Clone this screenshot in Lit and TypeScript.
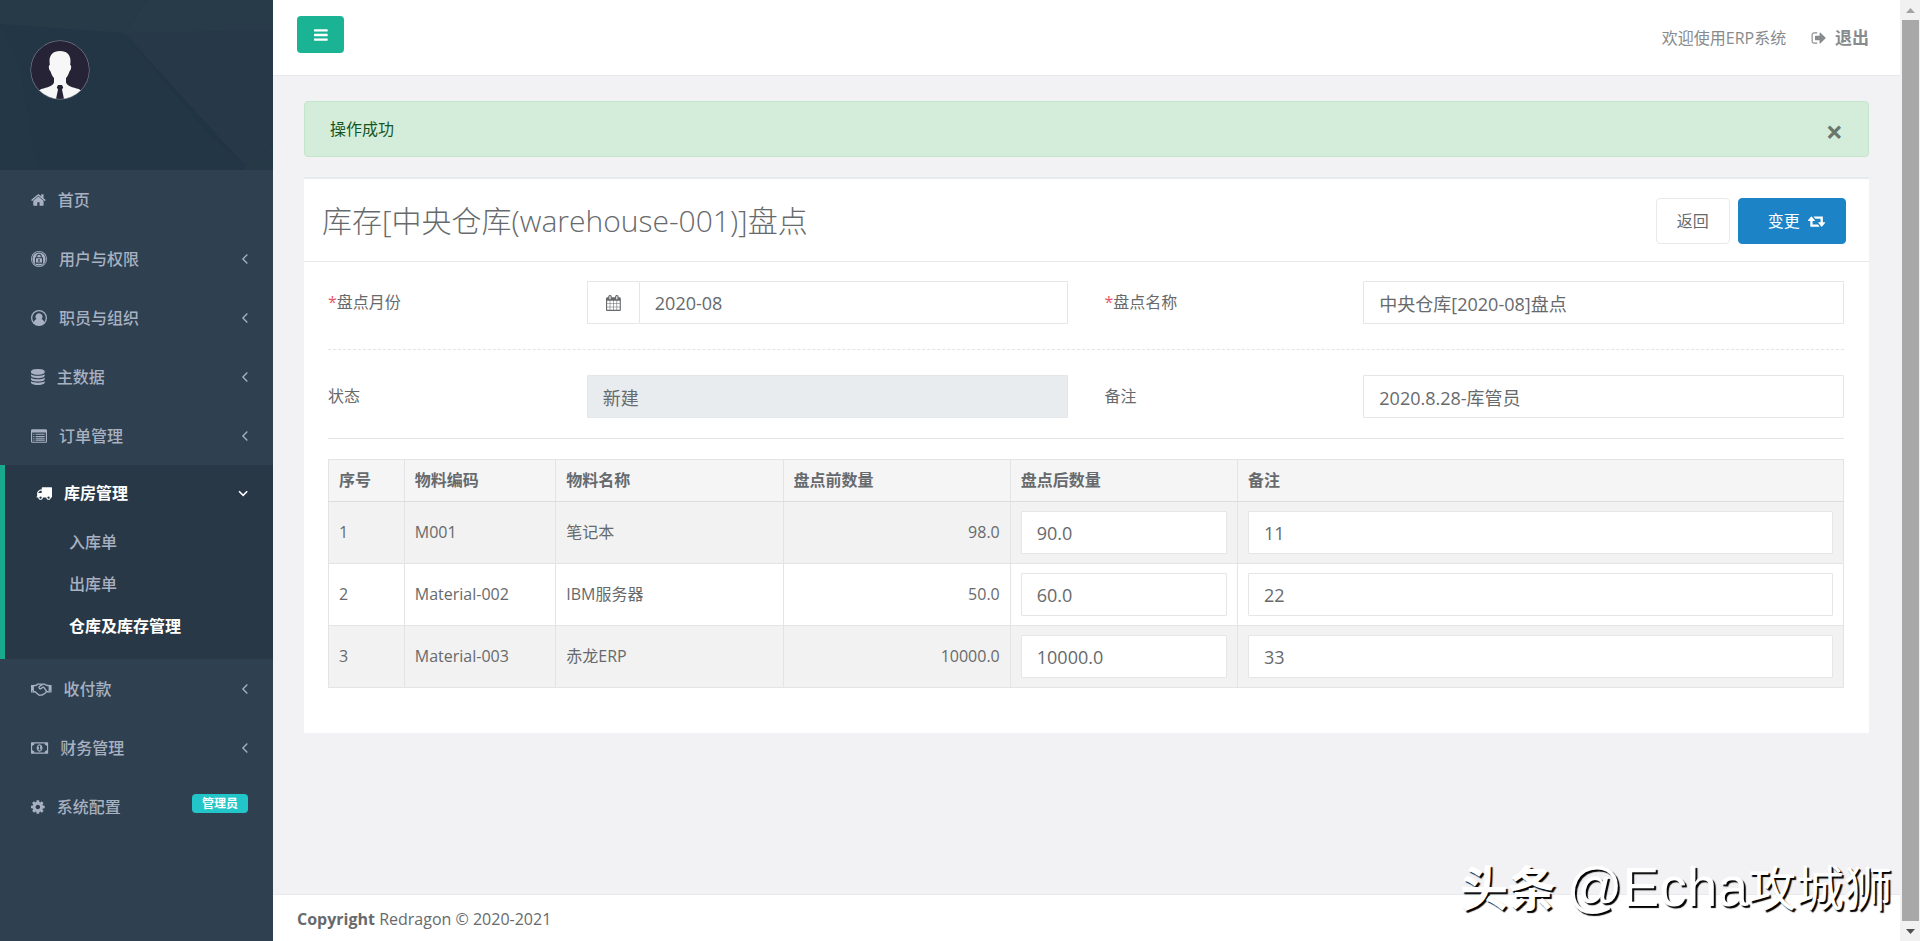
import { LitElement, html, css, svg, nothing } from "lit";
import { customElement, property, state } from "lit/decorators.js";
import { classMap } from "lit/directives/class-map.js";

/* Glyphs on a 1792-unit em; w is the advance width of each one. */
const ICONS: Record<string, { w: number; body: unknown }> = {
  home: {
    w: 1664,
    body: svg`<path transform="translate(-64)" d="M1472 992v480q0 26-19 45t-45 19h-384v-384h-256v384h-384q-26 0-45-19t-19-45v-480q0-1 .5-3t.5-3l575-474 575 474q1 2 1 6zm223-69l-62 74q-8 9-21 11h-3q-13 0-21-7l-692-577-692 577q-12 8-24 7-13-2-21-11l-62-74q-8-10-7-23.5t11-21.5l719-599q32-26 76-26t76 26l244 204v-195q0-14 9-23t23-9h192q14 0 23 9t9 23v408l219 182q10 8 11 21.5t-7 23.5z"/>`,
  },
  lock: {
    w: 1792,
    body: svg`<path fill-rule="evenodd" d="M896 0a896 896 0 1 0 0 1792a896 896 0 1 0 0-1792zM896 90a806 806 0 1 1 0 1612a806 806 0 1 1 0-1612z"/><path d="M896 160a736 736 0 1 0 0 1472a736 736 0 1 0 0-1472z"/><g fill="none" stroke="#2f4050" stroke-width="120"><path d="M500 760h792v600h-792z"/><path d="M640 760v-140a256 256 0 0 1 512 0v140"/></g><path fill="#2f4050" d="M896 900a100 100 0 0 1 60 180v150h-120v-150a100 100 0 0 1 60-180z"/>`,
  },
  user: {
    w: 1792,
    body: svg`<path fill-rule="evenodd" d="M896 0a896 896 0 1 0 0 1792a896 896 0 1 0 0-1792zM1480 1366C1440 1180 1340 1050 1180 1024A384 384 0 1 0 612 1024C452 1050 352 1180 312 1366A750 750 0 1 1 1480 1366z"/>`,
  },
  database: {
    w: 1536,
    body: svg`<path transform="translate(-128)" d="M896 768q237 0 443-43t325-127v170q0 69-103 128t-280 93.5-385 34.5-385-34.5-280-93.5-103-128v-170q119 84 325 127t443 43zm0 768q237 0 443-43t325-127v170q0 69-103 128t-280 93.5-385 34.5-385-34.5-280-93.5-103-128v-170q119 84 325 127t443 43zm0-384q237 0 443-43t325-127v170q0 69-103 128t-280 93.5-385 34.5-385-34.5-280-93.5-103-128v-170q119 84 325 127t443 43zm0-1152q208 0 385 34.5t280 93.5 103 128v128q0 69-103 128t-280 93.5-385 34.5-385-34.5-280-93.5-103-128v-128q0-69 103-128t280-93.5 385-34.5z"/>`,
  },
  list: {
    w: 1792,
    body: svg`<path fill-rule="evenodd" d="M160 128h1472q66 0 113 47t47 113v1216q0 66-47 113t-113 47H160q-66 0-113-47T0 1504V288q0-66 47-113t113-47zM160 512q-32 0-32 32v960q0 32 32 32h1472q32 0 32-32V544q0-32-32-32z"/><path d="M256 640h128v128H256zM256 896h128v128H256zM256 1152h128v128H256zM512 640h1024v128H512zM512 896h1024v128H512zM512 1152h1024v128H512zM256 1340h128v90H256zM512 1340h1024v90H512z"/>`,
  },
  truck: {
    w: 1792,
    body: svg`<path d="M640 1408q0-52-38-90t-90-38-90 38-38 90 38 90 90 38 90-38 38-90zm-384-512h384v-256h-158q-13 0-22 9l-195 195q-9 9-9 22v30zm1280 512q0-52-38-90t-90-38-90 38-38 90 38 90 90 38 90-38 38-90zm256-1088v1024q0 15-4 26.5t-13.5 18.5-16.5 11.5-23.5 6-22.5 2-25.5 0-22.5-.5q0 106-75 181t-181 75-181-75-75-181h-384q0 106-75 181t-181 75-181-75-75-181h-64q-3 0-22.5.5t-25.5 0-22.5-2-23.5-6-16.5-11.5-13.5-18.5-4-26.5q0-26 19-45t45-19v-320q0-8-.5-35t0-38 2.5-34.5 6.5-37 14-30.5 22.5-30l198-198q19-19 50.5-32t58.5-13h160v-192q0-26 19-45t45-19h1024q26 0 45 19t19 45z"/>`,
  },
  handshake: {
    w: 2304,
    body: svg`<path d="M0 448h330v840H0zM1974 448h330v840h-330z"/><path fill="none" stroke="currentColor" stroke-width="150" stroke-linejoin="round" stroke-linecap="round" d="M330 500h240l180-150h330l160 80M330 1200h130l390 350q120 90 240 20q130 40 220-60q130 10 180-100q130-10 150-130l80-80h254M1974 500h-200l-260-150h-240l-360 290q-60 90 30 190q110 90 230-20l140-120h110l350 500"/><path d="M120 1080h100v110H120zM2084 1080h100v110h-100z" fill="#2f4050"/>`,
  },
  money: {
    w: 1920,
    body: svg`<path d="M768 1152h384v-96h-128v-448h-114l-148 137 77 80q42-37 55-57h2v288h-128v96zm512-256q0 70-21 142t-59.5 134-101.5 101-138 39-138-39-101.5-101-59.5-134-21-142 21-142 59.5-134 101.5-101 138-39 138 39 101.5 101 59.5 134 21 142zm512 256v-512q-106 0-181-75t-75-181h-1152q0 106-75 181t-181 75v512q106 0 181 75t75 181h1152q0-106 75-181t181-75zm128-832v1152q0 26-19 45t-45 19h-1792q-26 0-45-19t-19-45v-1152q0-26 19-45t45-19h1792q26 0 45 19t19 45z"/>`,
  },
  cog: {
    w: 1536,
    body: svg`<path transform="translate(-128)" d="M1152 896q0-106-75-181t-181-75-181 75-75 181 75 181 181 75 181-75 75-181zm512-109v222q0 12-8 23t-20 13l-185 28q-19 54-39 91 35 50 107 138 10 12 10 25t-9 23q-27 37-99 108t-94 71q-12 0-26-9l-138-108q-44 23-91 38-16 136-29 186-7 28-36 28h-222q-14 0-24.5-8.5t-11.5-21.5l-28-184q-49-16-90-37l-141 107q-10 9-25 9-14 0-25-11-126-114-165-168-7-10-7-23 0-12 8-23 15-21 51-66.5t54-70.5q-27-50-41-99l-183-27q-13-2-21-12.5t-8-23.5v-222q0-12 8-23t19-13l186-28q14-46 39-92-40-57-107-138-10-12-10-24 0-10 9-23 26-36 98.5-107.5t94.5-71.5q13 0 26 10l138 107q44-23 91-38 16-136 29-186 7-28 36-28h222q14 0 24.5 8.5t11.5 21.5l28 184q49 16 90 37l142-107q9-9 24-9 13 0 25 10 129 119 165 170 7 8 7 22 0 12-8 23-15 21-51 66.5t-54 70.5q26 50 41 98l183 28q13 2 21 12.5t8 23.5z"/>`,
  },
  bars: {
    w: 1536,
    body: svg`<path transform="translate(-128)" d="M1664 1344v128q0 26-19 45t-45 19h-1408q-26 0-45-19t-19-45v-128q0-26 19-45t45-19h1408q26 0 45 19t19 45zm0-512v128q0 26-19 45t-45 19h-1408q-26 0-45-19t-19-45v-128q0-26 19-45t45-19h1408q26 0 45 19t19 45zm0-512v128q0 26-19 45t-45 19h-1408q-26 0-45-19t-19-45v-128q0-26 19-45t45-19h1408q26 0 45 19t19 45z"/>`,
  },
  calendar: {
    w: 1664,
    body: svg`<path transform="translate(-64)" d="M192 1664h288v-288h-288v288zm352 0h320v-288h-320v288zm-352-352h288v-320h-288v320zm352 0h320v-320h-320v320zm-352-384h288v-288h-288v288zm736 736h320v-288h-320v288zm-384-736h320v-288h-320v288zm768 736h288v-288h-288v288zm-384-352h320v-320h-320v320zm-352-864v-288q0-13-9.5-22.5t-22.5-9.5h-64q-13 0-22.5 9.5t-9.5 22.5v288q0 13 9.5 22.5t22.5 9.5h64q13 0 22.5-9.5t9.5-22.5zm736 864h288v-320h-288v320zm-384-384h320v-288h-320v288zm384 0h288v-288h-288v288zm32-480v-288q0-13-9.5-22.5t-22.5-9.5h-64q-13 0-22.5 9.5t-9.5 22.5v288q0 13 9.5 22.5t22.5 9.5h64q13 0 22.5-9.5t9.5-22.5zm384-64v1280q0 52-38 90t-90 38h-1408q-52 0-90-38t-38-90v-1280q0-52 38-90t90-38h128v-96q0-66 47-113t113-47h64q66 0 113 47t47 113v96h384v-96q0-66 47-113t113-47h64q66 0 113 47t47 113v96h128q52 0 90 38t38 90z"/>`,
  },
  signout: {
    w: 1664,
    body: svg`<path d="M704 1440q0 4 1 20t.5 26.5-3 23.5-10 19.5-20.5 6.5h-320q-119 0-203.5-84.5t-84.5-203.5v-704q0-119 84.5-203.5t203.5-84.5h320q13 0 22.5 9.5t9.5 22.5q0 4 1 20t.5 26.5-3 23.5-10 19.5-20.5 6.5h-320q-66 0-113 47t-47 113v704q0 66 47 113t113 47h312l11.5 1 11.5 3 8 5.5 7 9 2 13.5zm928-544q0 26-19 45l-544 544q-19 19-45 19t-45-19-19-45v-288h-448q-26 0-45-19t-19-45v-384q0-26 19-45t45-19h448v-288q0-26 19-45t45-19 45 19l544 544q19 19 19 45z"/>`,
  },
  retweet: {
    w: 1920,
    body: svg`<path d="M1280 1504q0 13-9.500 22.500t-22.500 9.500h-960q-8 0-13.500-2t-9-7-5.500-8-3-11.500-1-11.500v-600h-192q-26 0-45-19t-19-45q0-24 15-41l320-384q19-22 49-22t49 22l320 384q15 17 15 41 0 26-19 45t-45 19h-192v384h576q16 0 25 11l160 192q7 10 7 21zm640-416q0 24-15 41l-320 384q-20 23-49 23t-49-23l-320-384q-15-17-15-41 0-26 19-45t45-19h192v-384h-576q-16 0-25-12l-160-192q-7-9-7-20 0-13 9.500-22.500t22.500-9.500h960q8 0 13.500 2t9 7 5.500 8 3 11.500 1 11.500v600h192q26 0 45 19t19 45z"/>`,
  },
  left: {
    w: 640,
    body: svg`<path fill="none" stroke="currentColor" stroke-width="150" d="M600 400L100 896L600 1392"/>`,
  },
  down: {
    w: 1152,
    body: svg`<path fill="none" stroke="currentColor" stroke-width="180" d="M120 700L576 1156L1032 700"/>`,
  },
};

const icon = (name: string) => {
  const { w, body } = ICONS[name];
  return html`<svg class="icon" viewBox="0 0 ${w} 1792" aria-hidden="true">${body}</svg>`;
};

const shared = css`
  * {
    box-sizing: border-box;
  }
  .icon {
    height: 16px;
    flex: none;
    fill: currentColor;
    display: block;
    overflow: visible;
  }
  a {
    color: inherit;
    text-decoration: none;
  }
  button {
    font: inherit;
    cursor: pointer;
  }
`;

interface MenuItem {
  label: string;
  icon: string;
  leaf?: boolean;
  badge?: string;
  children?: { label: string; current?: boolean }[];
}

const MENU: MenuItem[] = [
  { label: "首页", icon: "home", leaf: true },
  { label: "用户与权限", icon: "lock" },
  { label: "职员与组织", icon: "user" },
  { label: "主数据", icon: "database" },
  { label: "订单管理", icon: "list" },
  {
    label: "库房管理",
    icon: "truck",
    children: [
      { label: "入库单" },
      { label: "出库单" },
      { label: "仓库及库存管理", current: true },
    ],
  },
  { label: "收付款", icon: "handshake" },
  { label: "财务管理", icon: "money" },
  { label: "系统配置", icon: "cog", badge: "管理员" },
];

@customElement("side-menu")
export class SideMenu extends LitElement {
  static styles = [
    shared,
    css`
      :host {
        display: block;
        background: #2f4050;
        color: #a7b1c2;
        font-weight: 500;
      }
      .head {
        height: 170px;
        display: grid;
        background: #233645;
        overflow: hidden;
      }
      .pattern,
      .avatar {
        grid-area: 1 / 1;
      }
      .pattern {
        width: 100%;
        height: 100%;
      }
      .avatar {
        width: 60px;
        height: 60px;
        margin: 40px 0 0 30px;
      }
      ul {
        list-style: none;
        margin: 0;
        padding: 0;
      }
      .row {
        display: flex;
        align-items: center;
        gap: 12px;
        height: 59px;
        padding: 0 25px 0 31px;
      }
      .arrow {
        margin-left: auto;
        display: flex;
      }
      .open {
        background: #293846;
        border-left: 5px solid #19aa8d;
        padding-bottom: 12px;
      }
      .open .row {
        height: 56px;
        color: #fff;
        font-weight: 700;
      }
      .sub a {
        display: block;
        line-height: 42px;
        padding-left: 64px;
      }
      .sub .current {
        color: #fff;
        font-weight: 700;
      }
      .badge {
        margin-left: auto;
        margin-bottom: 6px;
        padding: 0 10px;
        border-radius: 4px;
        background: #23c6c8;
        color: #fff;
        font-size: 12px;
        font-weight: 700;
        line-height: 19px;
      }
    `,
  ];

  render() {
    return html`
      <div class="head">
        <svg class="pattern" viewBox="0 0 273 170" preserveAspectRatio="none" aria-hidden="true">
          <path d="M0 0H147L124 33L0 24Z" fill="#273a48" />
          <path d="M147 0H273V145L245 166L124 33Z" fill="#273948" />
          <path d="M147 0H273V30L124 33Z" fill="#283b49" />
          <path d="M245 166L273 145V170H243Z" fill="#263947" />
          <path d="M0 24L18 60L38 170H0Z" fill="#243746" />
          <path d="M124 33L245 166L205 130Z" fill="#213443" />
        </svg>
        <svg class="avatar" viewBox="0 0 60 60" role="img" aria-label="用户头像">
          <defs><clipPath id="round"><circle cx="30" cy="30" r="29" /></clipPath></defs>
          <circle cx="30" cy="30" r="29.500" fill="#8d8f9c" />
          <g clip-path="url(#round)">
            <rect width="60" height="60" fill="#272336" />
            <path fill="#f7f7f8" d="M30 11c7 0 10.500 4 10.500 10l-.3 4c1.500 0 1.300 5-.8 6.500c-.8 3-1.900 5-3.400 6.500v4.500c1 3 5 4.500 9 5.500c4 1 7 2 9 6v8H6v-8c2-4 5-5 9-6c4-1 8-2.500 9-5.500V38c-1.500-1.500-2.600-3.500-3.400-6.500c-2.100-1.500-2.300-6.500-.8-6.500l-.3-4C19.500 15 23 11 30 11z" />
            <path fill="#272336" d="M28 45h4l1.200 2.500l-1.200 2l2 9.500h-8l2-9.500l-1.200-2z" />
          </g>
        </svg>
      </div>
      <nav>
        <ul>
          ${MENU.map(
            (m) => html`<li class=${classMap({ open: !!m.children })}>
              <a class="row" href="#">
                ${icon(m.icon)}<span>${m.label}</span>
                ${m.badge
                  ? html`<span class="badge">${m.badge}</span>`
                  : m.leaf
                    ? nothing
                    : html`<span class="arrow">${icon(m.children ? "down" : "left")}</span>`}
              </a>
              ${m.children
                ? html`<ul class="sub">
                    ${m.children.map(
                      (c) => html`<li><a class=${classMap({ current: !!c.current })} href="#">${c.label}</a></li>`,
                    )}
                  </ul>`
                : nothing}
            </li>`,
          )}
        </ul>
      </nav>
    `;
  }
}

interface StockRow {
  code: string;
  name: string;
  before: string;
  after: string;
  note: string;
}

@customElement("stock-form")
export class StockForm extends LitElement {
  @property({ attribute: false }) rows: StockRow[] = [];

  static styles = [
    shared,
    css`
      :host {
        display: block;
        background: #fff;
        border-top: 2px solid #e7eaec;
      }
      .title {
        display: flex;
        align-items: center;
        gap: 8px;
        padding: 19px 23px 17px 18px;
        border-bottom: 1px solid #e7eaec;
      }
      h2 {
        flex: 1;
        margin: 0;
        font-size: 30px;
        font-weight: 300;
        line-height: 46px;
      }
      .btn {
        display: flex;
        align-items: center;
        gap: 8px;
        height: 46px;
        padding: 0 20px;
        border: 1px solid #e7eaec;
        border-radius: 4px;
        background: #fff;
        color: inherit;
      }
      .primary {
        padding: 0 20px 0 29px;
        border-color: #1c84c6;
        background: #1c84c6;
        color: #fff;
      }
      .body {
        padding: 19px 25px 45px 24px;
      }
      .fields {
        display: grid;
        grid-template-columns: repeat(12, minmax(0, 1fr));
        column-gap: 37px;
      }
      .fields label {
        grid-column: span 2;
        line-height: 43px;
      }
      .req {
        color: #ed5565;
      }
      .control {
        grid-column: span 4;
        display: flex;
      }
      .addon {
        display: grid;
        place-items: center;
        width: 52px;
        border: 1px solid #e5e6e7;
        border-right: 0;
        color: #676a6c;
      }
      input {
        flex: 1;
        width: 100%;
        min-width: 0;
        height: 43px;
        margin: 0;
        padding: 0 15px;
        border: 1px solid #e5e6e7;
        border-radius: 1px;
        background: #fff;
        color: inherit;
        font: inherit;
        font-size: 18px;
        outline: none;
      }
      input:disabled {
        background: #e9ecef;
        opacity: 1;
      }
      hr {
        margin: 20px 0;
        border: 0;
        border-top: 1px solid #e2e4e6;
      }
      .dashed {
        margin: 25px 0;
        border-top: 1px dashed #e2e5e7;
      }
      table {
        width: 100%;
        table-layout: fixed;
        border-collapse: collapse;
      }
      th,
      td {
        padding: 9px 10px;
        border: 1px solid #e3e4e6;
        text-align: left;
        line-height: 23px;
      }
      th {
        background: #f5f5f6;
        border-bottom-color: #dddddf;
        font-weight: 700;
      }
      td input {
        display: block;
        height: 43px;
      }
      tbody tr:nth-child(odd) {
        background: #f2f2f2;
      }
      .num {
        text-align: right;
      }
      .w5 {
        width: 5%;
      }
      .w10 {
        width: 10%;
      }
      .w15 {
        width: 15%;
      }
    `,
  ];

  render() {
    return html`
      <div class="title">
        <h2>库存[中央仓库(warehouse-001)]盘点</h2>
        <button class="btn" type="button">返回</button>
        <button class="btn primary" type="button">变更${icon("retweet")}</button>
      </div>
      <form class="body">
        <div class="fields">
          <label for="month"><span class="req">*</span>盘点月份</label>
          <div class="control">
            <span class="addon">${icon("calendar")}</span>
            <input id="month" type="text" value="2020-08" />
          </div>
          <label for="name"><span class="req">*</span>盘点名称</label>
          <div class="control"><input id="name" type="text" value="中央仓库[2020-08]盘点" /></div>
        </div>
        <hr class="dashed" />
        <div class="fields">
          <label for="status">状态</label>
          <div class="control"><input id="status" type="text" value="新建" disabled /></div>
          <label for="note">备注</label>
          <div class="control"><input id="note" type="text" value="2020.8.28-库管员" /></div>
        </div>
        <hr />
        <table>
          <colgroup>
            <col class="w5" />
            <col class="w10" />
            <col class="w15" />
            <col class="w15" />
            <col class="w15" />
            <col />
          </colgroup>
          <thead>
            <tr>
              <th>序号</th>
              <th>物料编码</th>
              <th>物料名称</th>
              <th>盘点前数量</th>
              <th>盘点后数量</th>
              <th>备注</th>
            </tr>
          </thead>
          <tbody>
            ${this.rows.map(
              (r, i) => html`<tr>
                <td>${i + 1}</td>
                <td>${r.code}</td>
                <td>${r.name}</td>
                <td class="num">${r.before}</td>
                <td><input type="text" aria-label="盘点后数量" .value=${r.after} /></td>
                <td><input type="text" aria-label="备注" .value=${r.note} /></td>
              </tr>`,
            )}
          </tbody>
        </table>
      </form>
    `;
  }
}

@customElement("app-root")
export class AppRoot extends LitElement {
  @state() private alertOpen = true;

  private rows: StockRow[] = [
    { code: "M001", name: "笔记本", before: "98.0", after: "90.0", note: "11" },
    { code: "Material-002", name: "IBM服务器", before: "50.0", after: "60.0", note: "22" },
    { code: "Material-003", name: "赤龙ERP", before: "10000.0", after: "10000.0", note: "33" },
  ];

  static styles = [
    shared,
    css`
      :host {
        display: grid;
        grid-template-columns: 273px minmax(0, 1fr) 20px;
        min-height: 100vh;
        position: relative;
        background: #f2f2f4;
        color: #676a6c;
        font-family: "Open Sans", "Noto Sans CJK SC", sans-serif;
        font-size: 16px;
        line-height: 24px;
      }
      .page {
        display: flex;
        flex-direction: column;
      }
      .top {
        display: flex;
        align-items: center;
        height: 76px;
        padding: 0 31px 0 24px;
        border-bottom: 1px solid #e7eaec;
        background: #fff;
        color: #888b8d;
      }
      .toggle {
        display: grid;
        place-items: center;
        width: 47px;
        height: 37px;
        margin: 0 auto 6px 0;
        padding: 0;
        border: 0;
        border-radius: 4px;
        background: #1ab394;
        color: #fff;
      }
      .logout {
        display: flex;
        align-items: center;
        gap: 9px;
        margin-left: 25px;
        font-size: 17px;
        font-weight: 700;
      }
      .content {
        flex: 1;
        display: flex;
        flex-direction: column;
        gap: 20px;
        padding: 25px 31px 40px;
      }
      .alert {
        display: flex;
        align-items: center;
        justify-content: space-between;
        height: 56px;
        padding: 0 25px;
        border: 1px solid #c3e6cb;
        border-radius: 4px;
        background: #d4edda;
        color: #155724;
      }
      .close {
        padding: 6px 0 0;
        border: 0;
        background: none;
        color: #6a776d;
        font-size: 30px;
        font-weight: 700;
        line-height: 24px;
      }
      .foot {
        height: 47px;
        padding: 12px 24px;
        border-top: 1px solid #e7eaec;
        background: #fff;
      }
      .scroll {
        position: sticky;
        top: 0;
        height: 100vh;
        display: flex;
        flex-direction: column;
        align-items: center;
        background: #f1f1f1;
      }
      .scroll svg {
        flex: none;
        width: 20px;
        height: 20px;
      }
      .thumb {
        flex: 1;
        width: 17px;
        background: #a8a8a8;
      }
      .mark {
        position: absolute;
        right: 28px;
        bottom: 22px;
        color: #fff;
        font-size: 48px;
        line-height: 64px;
        font-family: "Noto Sans CJK SC", sans-serif;
        text-shadow: 2px 2px 1px #000;
        white-space: nowrap;
        pointer-events: none;
      }
      .mark b {
        font-weight: 700;
      }
      .latin {
        font-family: "Liberation Sans", sans-serif;
        font-size: 55px;
      }
    `,
  ];

  render() {
    return html`
      <side-menu></side-menu>
      <div class="page">
        <header class="top">
          <button class="toggle" type="button" aria-label="切换菜单">${icon("bars")}</button>
          <span>欢迎使用ERP系统</span>
          <a class="logout" href="#">${icon("signout")}<span>退出</span></a>
        </header>
        <main class="content">
          ${this.alertOpen
            ? html`<div class="alert" role="alert">
                <span>操作成功</span>
                <button class="close" type="button" aria-label="关闭" @click=${() => (this.alertOpen = false)}>×</button>
              </div>`
            : nothing}
          <stock-form .rows=${this.rows}></stock-form>
        </main>
        <footer class="foot"><strong>Copyright</strong> Redragon © 2020-2021</footer>
      </div>
      <div class="scroll" aria-hidden="true">
        <svg viewBox="0 0 20 20"><path d="M6 13L10.500 8L15 13Z" fill="#a3a3a3" /></svg>
        <div class="thumb"></div>
        <svg viewBox="0 0 20 20"><path d="M6 8H15L10.500 13Z" fill="#505050" /></svg>
      </div>
      <div class="mark"><b>头条</b> <span class="latin">@Echa</span>攻城狮</div>
    `;
  }
}
